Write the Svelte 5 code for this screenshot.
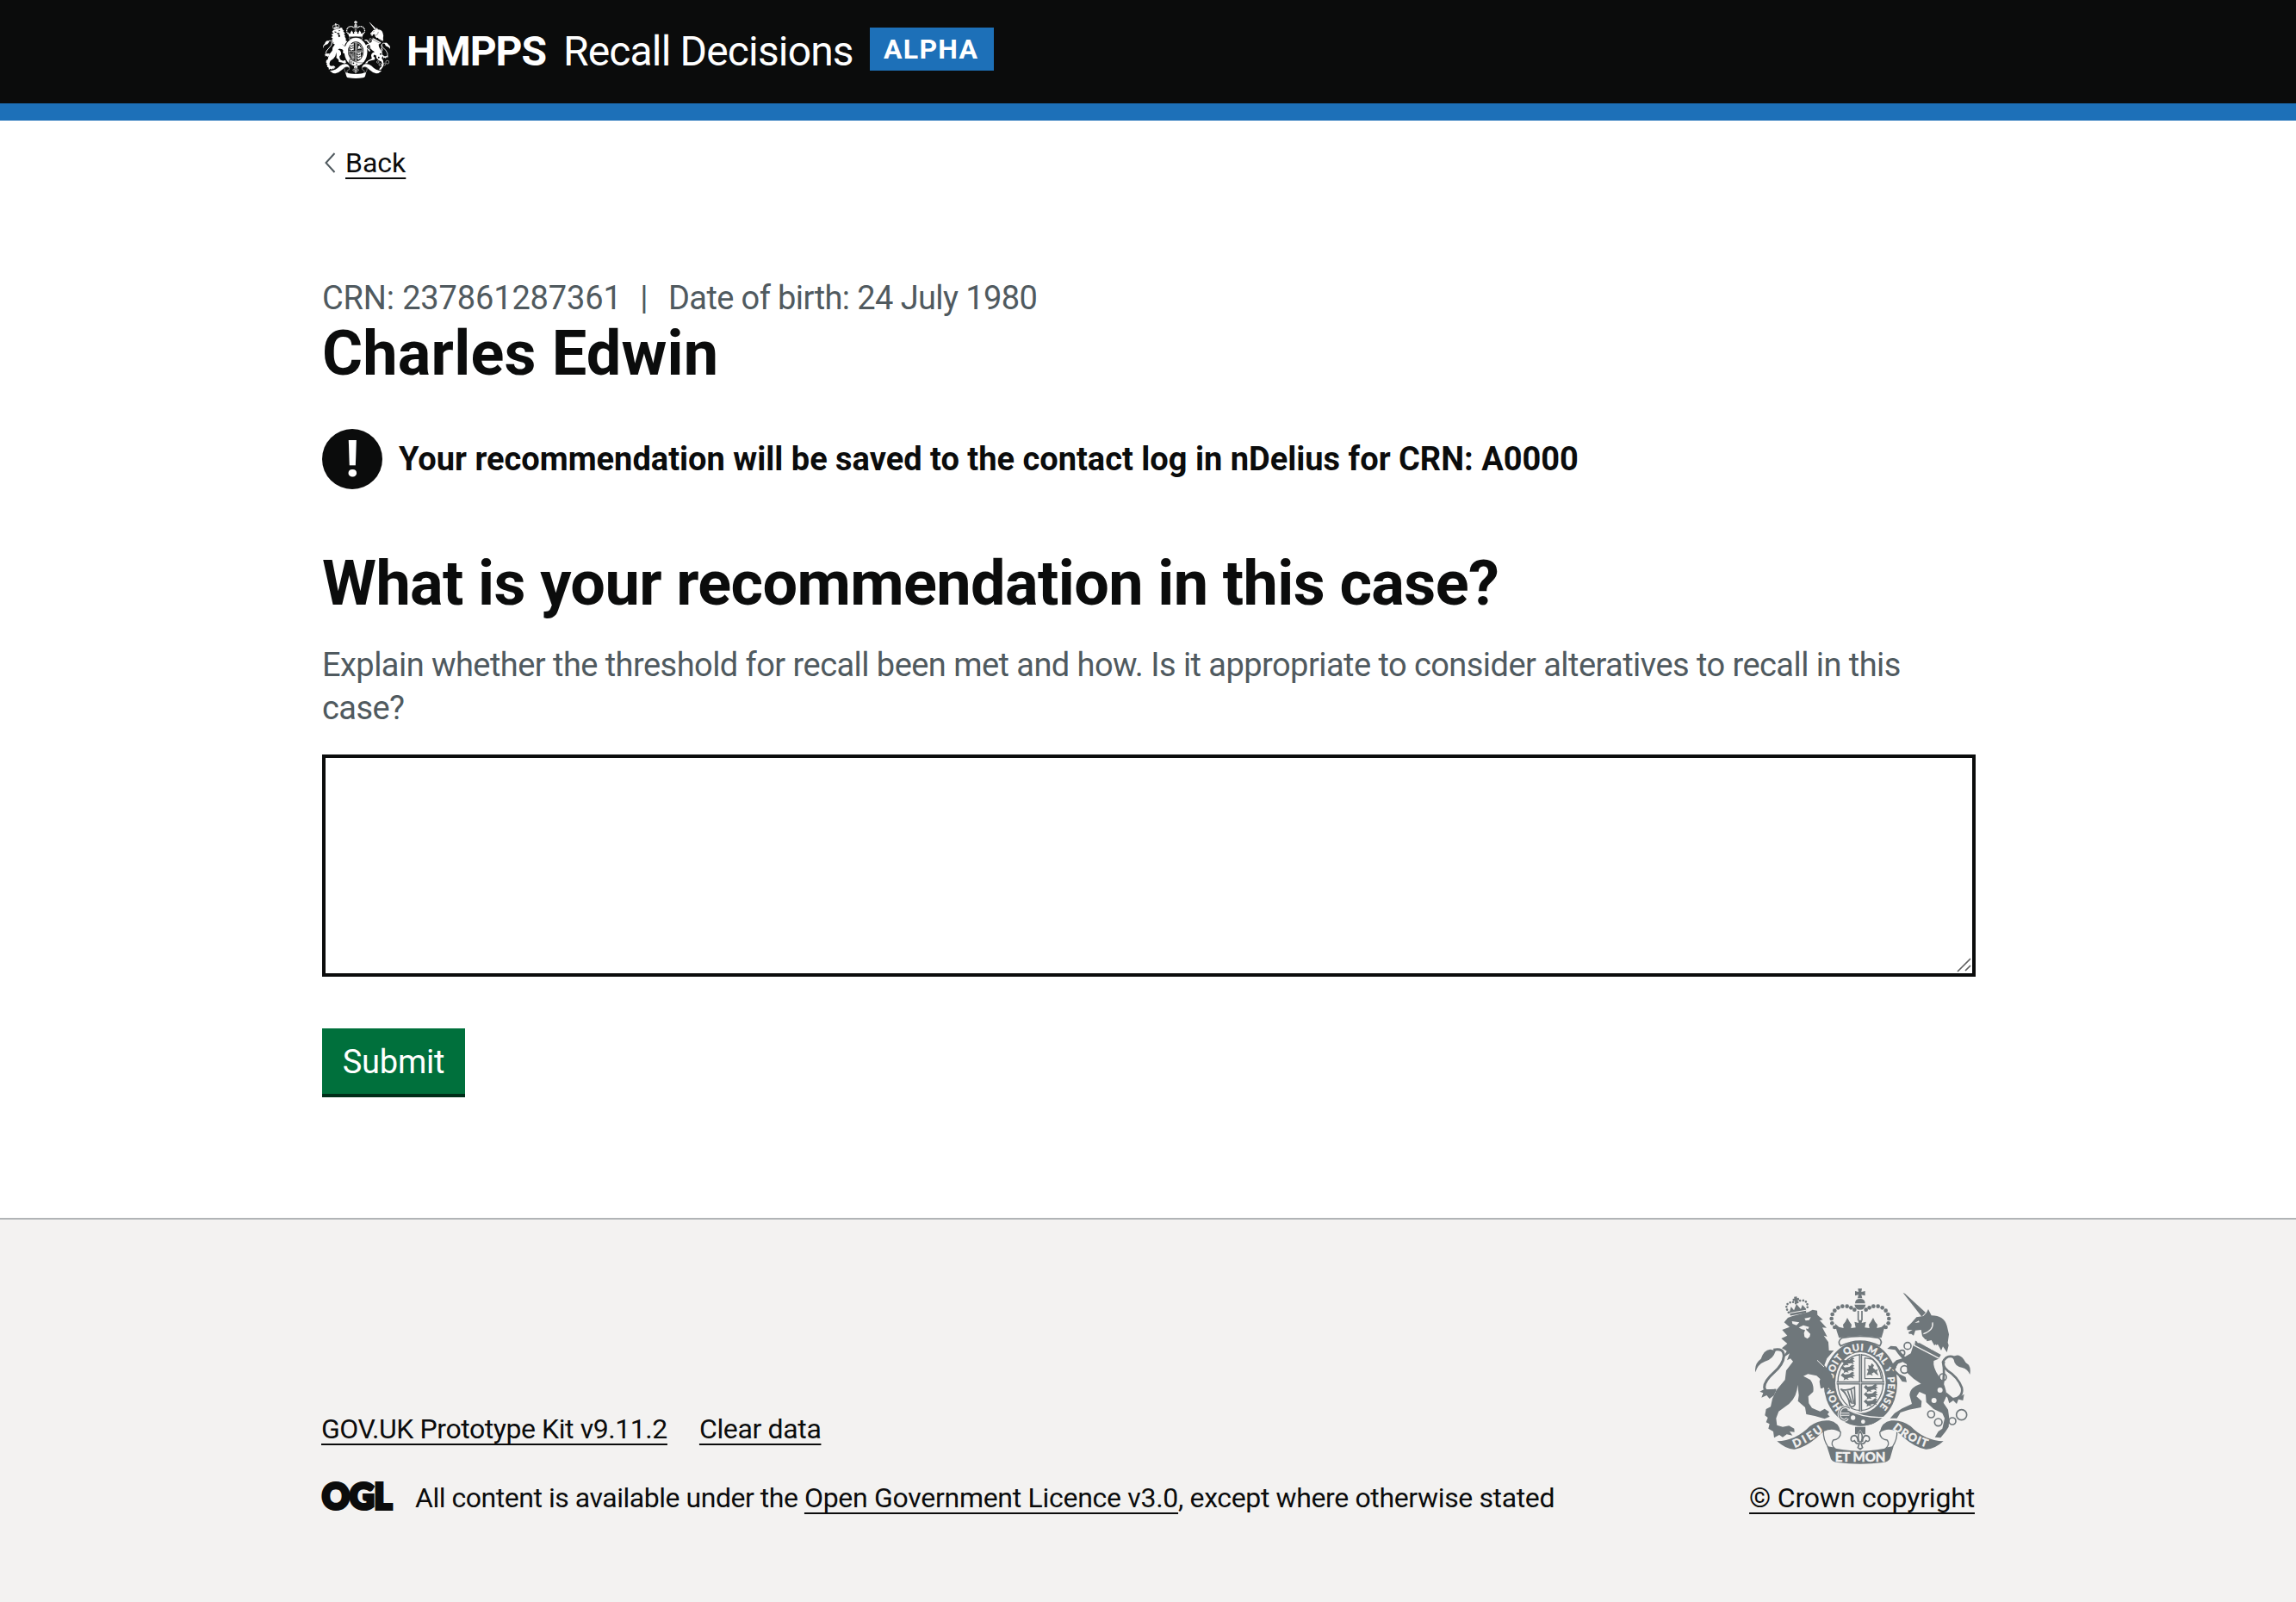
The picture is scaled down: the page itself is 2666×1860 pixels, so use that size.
<script>
  // Beads on the left arch of the crown; the right arch mirrors them around x = 420.
  const beads = [
    [331, 183], [322, 169], [320, 153], [323, 138], [331, 125], [343, 115], [358, 110], [374, 110], [388, 115], [400, 122]
  ];
  const links = [
    [585, 248, 12], [566, 272, 9], [574, 330, 13], [708, 357, 12], [667, 486, 12], [692, 514, 13], [741, 510, 12], [773, 488, 18]
  ];
  const quarterLions = [
    [352, 300], [352, 325], [352, 350], [432, 392], [432, 417], [432, 442]
  ];
</script>

{#snippet crest(cls, ink, paper, motto)}
  <svg class={cls} viewBox="54 48 750 612" preserveAspectRatio="none" fill={ink} aria-hidden="true">
    <!-- lion -->
    <path d="M168 150 L184 144 L240 130 L254 122 L270 125 L271 140 L290 157 L279 159 L303 185 L288 184 L305 216 L293 212 L309 235 L311 264 L328 264 L304 292 L295 316 L306 338 L325 350 L327 374 L330 392 L320 404 L310 392 L302 404 L295 392 L284 396 L281 380 L286 368 L268 352 L238 346 L222 353 L246 366 Q260 385 256 408 L239 424 L241 448 L252 464 L280 476 L296 467 L312 478 L306 486 L314 494 L296 502 L262 492 L232 486 L228 462 L214 450 L203 440 L206 420 L202 384 Q200 425 172 450 L136 476 L127 500 L130 524 L150 530 L172 526 L190 536 L191 548 L174 546 L184 560 L164 556 L150 566 L138 558 L120 568 L117 546 L100 536 L104 520 L92 514 L98 498 L88 490 L92 468 L108 460 L114 432 L128 402 L158 366 L162 334 L186 302 L177 292 L165 298 L174 274 L150 290 L164 266 L147 256 L166 240 L145 222 L166 212 L148 192 L174 182 L155 166 Z" />
    <g fill={paper}>
      <path d="M182 162 L208 166 L198 176 L184 171 Z" />
      <path d="M226 152 L248 148 L242 158 L230 160 Z" />
      <path d="M206 184 L222 176 L242 182 L238 190 L232 187 L232 192 L246 206 L244 216 L236 223 L226 217 L224 203 L228 193 L216 190 Z" />
    </g>
    <path d="M270 298 L322 348" stroke={paper} stroke-width="3" />
    <path d="M118 262 Q154 254 154 284 Q152 312 120 340 Q86 370 86 392 Q88 414 126 402" fill="none" stroke={ink} stroke-width="9" />
    <path d="M126 264 Q116 296 88 302 Q62 312 55 340 Q50 310 74 293 Q84 262 106 260 Z" />
    <path d="M84 400 L70 407 L82 412 L76 428 L94 420 L104 432 L120 420 L128 398 Z" />
    <!-- lion's crown -->
    <g transform="rotate(-10 200 115)">
      <path d="M172 124 L180 108 L188 122 L200 102 L212 122 L220 108 L230 124 L228 138 L172 138 Z" />
      <path d="M173 129 H229" stroke={paper} stroke-width="3" />
      <path d="M168 126 Q156 98 178 93 Q194 90 200 102 Q208 90 222 93 Q244 98 234 126" fill="none" stroke={ink} stroke-width="8" stroke-linecap="round" stroke-dasharray="0 10.5" />
      <path d="M196 76 H206 V82 H212 V90 H206 V98 H196 V90 H190 V82 H196 Z" />
    </g>

    <!-- unicorn -->
    <path d="M569 63 L576 66 L648 132 L634 146 Z" />
    <path d="M583 182 L598 168 L616 148 L640 144 L651 132 L657 120 L668 142 Q712 142 722 178 L729 208 L725 236 L728 246 L722 270 L708 250 L702 264 L690 242 L680 250 L668 228 L652 232 L636 214 L632 192 L612 194 L606 212 L598 206 L590 206 L588 200 L602 192 L584 193 Z" />
    <path d="M610 168 L624 160 L626 166 Z" fill={paper} />
    <path d="M672 166 Q676 194 640 206" fill="none" stroke={paper} stroke-width="4" />
    <path d="M608 236 L700 290 L676 300 Q672 322 694 354 Q722 388 720 424 L710 446 L726 470 L730 500 L728 530 L716 548 L700 568 L680 566 L692 546 L706 536 L714 500 L706 482 L676 468 L650 444 L648 418 L626 408 L616 424 L634 440 L632 462 L590 470 L560 480 L548 500 L524 500 L540 482 L566 466 L600 450 L592 420 Q592 392 632 380 L606 362 L584 342 L582 312 L568 304 L552 310 L540 330 L556 346 L578 356 L582 374 L566 372 L552 352 L528 334 L524 318 L546 298 L566 292 L552 276 L542 262 L514 258 L526 248 L546 250 L560 268 L576 286 L596 274 Z" />
    <path d="M610 226 L704 278 L696 292 L608 246 Z" fill={ink} stroke={paper} stroke-width="4" />
    <path d="M622 238 l4 -16 l10 14 l12 -6 l4 16 l14 -6 l4 16 l12 -8 l6 18" fill="none" stroke={paper} stroke-width="7" />
    <path d="M706 392 Q716 338 708 304 Q722 276 748 288 M704 400 Q712 420 744 434 Q780 426 774 394 Q760 356 724 334 Q706 318 712 302" fill="none" stroke={ink} stroke-width="8" />
    <path d="M740 288 Q762 270 780 294 Q786 308 798 314 Q806 326 802 348 Q794 328 776 324 Q748 318 746 296 Z" />
    <path d="M718 408 L730 448 L744 438 L756 450 L762 434 L778 438 L782 416 L762 428 L742 428 Z" />
    {#each links as [cx, cy, r]}
      <circle {cx} {cy} {r} fill="none" stroke={ink} stroke-width="5" />
    {/each}
    <circle cx="698" cy="402" r="9" fill={paper} />
    <circle cx="677" cy="438" r="9" fill={paper} />

    <!-- crown -->
    <path d="M412 48 H426 L424 60 L437 57 V73 L424 70 L427 82 H411 L414 70 L402 73 V57 L414 60 Z" />
    <path d="M402 100 Q402 84 419 84 Q437 84 437 100 Z" />
    <path d="M400 104 H439 Q436 122 419 122 Q403 122 400 104 Z" />
    <path d="M413 126 V160 M426 126 V160" stroke={ink} stroke-width="5" />
    <g>
      {#each beads as [x, y]}
        <circle cx={x} cy={y} r="7" />
        <circle cx={840 - x} cy={y} r="7" />
      {/each}
    </g>
    <path d="M332 170 L346 182 L362 186 L360 174 L368 164 L375 150 L383 164 L390 174 L388 186 L404 184 L400 164 L414 168 L413 158 H427 L425 168 L440 164 L436 184 L452 186 L450 174 L457 164 L465 150 L472 164 L480 174 L478 186 L494 182 L508 170 L500 200 L494 220 Q420 204 346 220 L338 196 Z" />
    <path d="M356 220 Q420 208 484 220 Q500 232 488 248 Q420 214 352 248 Q338 234 356 220 Z" fill={paper} stroke={ink} stroke-width="5" />

    <!-- garter and shield -->
    <ellipse cx="421" cy="379" rx="128" ry="148" />
    <ellipse cx="421" cy="376" rx="88" ry="106" fill={paper} />
    <ellipse cx="421" cy="376" rx="79" ry="97" fill="none" stroke={ink} stroke-width="4" />
    <path d="M421 276 V476 M338 377 H504" stroke={ink} stroke-width="11" />
    <path d="M421 276 V476 M338 377 H504" stroke={paper} stroke-width="2" />
    {#each quarterLions as [x, y]}
      <path d="M{x} {y} l8 -8 l6 6 l16 -2 l10 -8 l8 4 l-6 4 l8 6 l-8 2 l4 8 l-10 -4 l-12 2 l4 6 l-10 -2 l-8 4 l2 -8 Z" />
    {/each}
    <path d="M436 290 L462 294 Q488 316 494 362 L436 362 Z" fill="none" stroke={ink} stroke-width="4" />
    <path d="M442 350 l6 -14 l-6 -6 l8 -2 l-2 -14 l8 4 l4 -10 l8 8 l-4 8 l10 8 l8 -4 l-4 10 l6 14 l-10 -6 l-6 -6 l-8 4 l4 8 l-10 -4 Z" />
    <path d="M352 398 Q374 408 400 392 L402 452 Q394 466 384 456 Q380 420 352 398 Z M364 406 L386 446 M376 404 L392 450 M388 400 L398 450" fill="none" stroke={ink} stroke-width="5" />
    {#if motto}
      <path id="garter-line" d="M421 492 A96 114 0 0 1 421 264 A96 114 0 0 1 421 492" fill="none" />
      <text class="motto" fill={paper} stroke={paper} stroke-width="1.2" font-size="33"><textPath href="#garter-line" startOffset="11%" textLength="512">HONI SOIT QUI MAL Y PENSE</textPath></text>
    {/if}
    <!-- paw and hoof lying over the garter -->
    <path d="M296 316 L322 350 L327 374 L330 392 L320 406 L310 394 L302 406 L294 392 L282 396 L278 372 Z" />
    <path d="M526 316 L544 326 M524 330 L540 350" stroke={ink} stroke-width="10" />
    <!-- buckle -->
    <path d="M372 468 Q436 500 500 492 Q470 530 410 526 Q372 518 356 492 Z" />
    <path d="M376 470 Q436 502 508 496" fill="none" stroke={paper} stroke-width="4" />
    <path d="M384 466 Q366 452 352 468 Q340 486 352 502 Q366 514 376 500 M352 486 H382" fill="none" stroke={paper} stroke-width="10" />
    <path d="M384 466 Q366 452 352 468 Q340 486 352 502 Q366 514 376 500 M352 486 H382" fill="none" stroke={ink} stroke-width="4" />
    <circle cx="395" cy="498" r="8" fill={paper} />
    <circle cx="430" cy="512" r="7" fill={paper} />

    <!-- fleur-de-lis -->
    <path d="M402 530 H438 V556 H430 L420 540 L410 556 H402 Z" />
    <path d="M420 546 Q408 560 416 582 H424 Q432 560 420 546 Z M412 582 Q412 562 400 560 Q386 562 388 576 Q392 584 400 578 Q406 590 412 588 M428 582 Q428 562 440 560 Q454 562 452 576 Q448 584 440 578 Q434 590 428 588 M408 588 H432 M416 590 L412 602 L420 608 L428 602 L424 590" fill="none" stroke={ink} stroke-width="5" />

    <!-- ribbon -->
    {#each [null, 'translate(840 0) scale(-1 1)'] as flip}
      <g transform={flip}>
        <path d="M130 580 Q196 578 244 528 Q276 504 312 508 Q346 514 352 548 Q334 534 312 540 Q294 540 270 566 Q228 602 192 608 Q164 610 130 580 Z" />
        <path d="M292 544 Q326 528 352 548 Q352 572 326 576 Q316 590 330 604 L308 600 Q290 572 292 544 Z" fill={paper} stroke={ink} stroke-width="4" />
      </g>
    {/each}
    <path d="M304 598 Q420 630 536 598 L524 640 Q518 652 500 654 Q420 664 340 654 Q324 652 318 642 Z" />
    {#if motto}
      <path id="ribbon-left" d="M192 603 Q246 582 300 538" fill="none" />
      <path id="ribbon-right" d="M532 536 Q582 580 660 604" fill="none" />
      <g class="motto" fill={paper} stroke={paper} stroke-width="1.5">
        <text font-size="38"><textPath href="#ribbon-left" textLength="116">DIEU</textPath></text>
        <text font-size="38"><textPath href="#ribbon-right" textLength="136">DROIT</textPath></text>
        <text x="420" y="651" font-size="48" text-anchor="middle" textLength="176" lengthAdjust="spacingAndGlyphs">ET MON</text>
      </g>
    {/if}
  </svg>
{/snippet}

<header class="header">
  <div class="container header-row">
    {@render crest('crest-small', '#ffffff', '#0b0c0c', false)}
    <span class="org">HMPPS</span>
    <span class="service">Recall Decisions</span>
    <strong class="phase">ALPHA</strong>
  </div>
</header>

<div class="container">
  <a class="back" href="#back">
    <svg viewBox="0 0 14 24" aria-hidden="true"><path d="M12.5 1 L2.5 12 L12.5 23" fill="none" stroke="#505a5f" stroke-width="2" /></svg>
    <span class="link">Back</span>
  </a>

  <main>
    <div class="caption">
      <span class="crn">CRN: 237861287361</span>
      <span class="divider">|</span>
      <span class="dob">Date of birth: 24 July 1980</span>
    </div>
    <h1 class="name">Charles Edwin</h1>

    <div class="warning">
      <span class="warning-icon" aria-hidden="true">!</span>
      <strong>Your recommendation will be saved to the contact log in nDelius for CRN: A0000</strong>
    </div>

    <h1 class="question"><label for="recommendation">What is your recommendation in this case?</label></h1>
    <p class="hint">Explain whether the threshold for recall been met and how. Is it appropriate to consider alteratives to recall in this case?</p>
    <div class="field">
      <textarea id="recommendation"></textarea>
      <svg class="grip" viewBox="0 0 18 18" aria-hidden="true"><path d="M1 17 L16 2 M10 16 L16 10" stroke="#5f5f5f" stroke-width="1.6" /></svg>
    </div>
    <button class="submit" type="button">Submit</button>
  </main>
</div>

<footer class="footer">
  <div class="container footer-row">
    <div class="meta">
      <div class="footer-links">
        <a class="link kit" href="#kit">GOV.UK Prototype Kit v9.11.2</a>
        <a class="link clear" href="#clear">Clear data</a>
      </div>
      <div class="licence">
        <svg class="ogl" viewBox="0 0 82 34" aria-label="OGL">
          <text x="1" y="31.6" textLength="81" lengthAdjust="spacingAndGlyphs">OGL</text>
        </svg>
        <span class="licence-text"><span class="l1">All content is available under the{' '}</span><a class="link l2" href="#ogl">Open Government Licence v3.0</a><span class="l3">, except where otherwise stated</span></span>
      </div>
    </div>
    <div class="copyright">
      {@render crest('crest-large', '#6f777b', '#f3f2f1', true)}
      <a class="link crown" href="#crown">© Crown copyright</a>
    </div>
  </div>
</footer>

<style>
  :global(body) { background: #f3f2f1; }
  :global(#app) {
    display: flex;
    flex-direction: column;
    min-height: 1860px;
    background: #fff;
    color: #0b0c0c;
    font-family: Roboto, "Open Sans", sans-serif;
  }
  .container { width: 1920px; margin: 0 0 0 374px; }

  .header { height: 120px; background: #0b0c0c; border-bottom: 20px solid #1d70b8; color: #fff; }
  .header-row { display: flex; align-items: flex-start; padding-top: 20px; }
  .crest-small { width: 78px; height: 67px; margin: 4px 19px 0 1px; flex: none; }
  .org { margin-top: 10px; width: 182px; font-size: 48px; line-height: 60px; font-weight: 700; letter-spacing: -1.1px; }
  .service { margin-top: 10px; width: 356px; font-size: 48px; line-height: 60px; letter-spacing: -0.85px; white-space: nowrap; }
  .phase { margin-top: 12px; width: 144px; box-sizing: border-box; padding-left: 16px; background: #1d70b8; font-size: 32px; line-height: 50px; letter-spacing: 1.3px; }

  .link { color: #0b0c0c; text-decoration: underline; text-decoration-thickness: 2px; text-underline-offset: 6px; text-decoration-skip-ink: none; }
  .back { display: inline-flex; align-items: center; gap: 11px; margin-top: 29px; padding-left: 2px; text-decoration: none; font-size: 32px; line-height: 40px; }
  .back svg { width: 14px; height: 24px; }

  main { padding-top: 112px; padding-bottom: 144px; }
  h1, p { margin: 0; }
  .caption { display: flex; font-size: 38px; line-height: 50px; color: #505a5f; white-space: pre; }
  .divider { width: 56px; text-align: center; }
  .crn { width: 346px; letter-spacing: -0.15px; }
  .dob { letter-spacing: -0.6px; }
  .name { font-size: 72px; line-height: 80px; letter-spacing: 0.2px; }
  .warning { display: flex; align-items: center; gap: 19px; margin-top: 47px; font-size: 38px; line-height: 50px; }
  .warning-icon { width: 70px; height: 70px; border-radius: 50%; background: #0b0c0c; color: #fff; font-size: 60px; line-height: 70px; font-weight: 700; text-align: center; }
  .question { margin-top: 70px; font-size: 72px; line-height: 80px; letter-spacing: -0.6px; }
  .hint { margin-top: 29px; font-size: 38px; line-height: 50px; letter-spacing: -0.55px; color: #505a5f; }
  .field { position: relative; margin-top: 29px; height: 258px; }
  textarea { display: block; box-sizing: border-box; width: 100%; height: 100%; border: 4px solid #0b0c0c; border-radius: 0; background: #fff; resize: none; padding: 10px; font: inherit; font-size: 38px; }
  .grip { position: absolute; right: 4px; bottom: 5px; width: 18px; height: 18px; }
  .submit { display: block; box-sizing: border-box; width: 166px; height: 76px; margin-top: 60px; padding: 2px 0 0; border: 0; border-radius: 0; background: #00703c; box-shadow: 0 4px 0 #002d18; color: #fff; font: 400 38px/74px Roboto, sans-serif; letter-spacing: -0.2px; text-align: center; }

  .footer { flex: 1; border-top: 2px solid #b1b4b6; background: #f3f2f1; font-size: 32px; line-height: 40px; }
  .footer-row { display: flex; justify-content: space-between; align-items: flex-end; margin-left: 373px; padding-top: 80px; }
  .footer-links { display: flex; gap: 37px; margin-bottom: 40px; }
  .licence { display: flex; align-items: flex-start; gap: 27px; }
  .ogl { width: 82px; height: 34px; margin-top: 1px; overflow: visible; }
  .ogl text { font: 900 41px Lato, sans-serif; fill: #0b0c0c; stroke: #0b0c0c; stroke-width: 4px; }
  .licence-text { white-space: pre; }
  .kit { letter-spacing: -0.43px; }
  .clear { letter-spacing: -0.36px; }
  .l1 { letter-spacing: -0.47px; }
  .l2 { letter-spacing: -0.29px; }
  .l3 { letter-spacing: -0.37px; }
  .crown { letter-spacing: -0.18px; }
  .copyright { display: flex; flex-direction: column; align-items: center; }
  .crest-large { width: 250px; height: 204px; margin: 0 0 19px 2px; }
  .motto { font-family: Lato, sans-serif; font-weight: 700; }
</style>
